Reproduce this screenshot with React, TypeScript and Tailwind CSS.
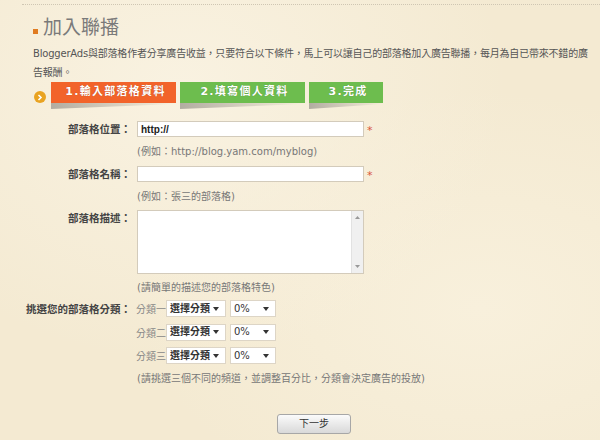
const font = "font-['DejaVu_Sans','Noto_Sans_CJK_TC',sans-serif]";

function Arrow() {
  return (
    <svg width="6" height="4" viewBox="0 0 6 4" className="shrink-0">
      <path d="M0 0h6L3 4z" fill="#333" />
    </svg>
  );
}

function Select({ value, w, bold }: { value: string; w: string; bold?: boolean }) {
  return (
    <div className={`${w} h-[17px] flex items-center justify-between pl-[3px] pr-[6px] bg-white border border-[#ddd5c6] text-[10px] leading-none text-[#333] ${bold ? 'font-bold' : ''}`}>
      <span>{value}</span>
      <Arrow />
    </div>
  );
}

function Label({ children }: { children: React.ReactNode }) {
  return <div className="w-[131px] shrink-0 text-right text-[10.5px] leading-[16px] font-bold text-[#444]">{children}</div>;
}

function Step({ text, w, color }: { text: string; w: string; color: string }) {
  return (
    <div className={`${w} flex flex-col`}>
      <div className={`h-[21px] ${color} flex items-center justify-center pl-[4px] text-white font-bold text-[11px] tracking-[1.3px] [text-shadow:0_0_1px_rgba(0,0,0,0.3)]`}>
        {text}
      </div>
      <div className="h-[6px] bg-gradient-to-r from-[#aaa59b] via-[#d2cbbb] to-transparent [clip-path:polygon(0_0,100%_0,100%_15%,0_100%)] opacity-90" />
    </div>
  );
}

export default function App() {
  const cats = ['分類一', '分類二', '分類三'];
  return (
    <div className={`w-[600px] h-[440px] overflow-hidden bg-[#f4ead2] bg-[radial-gradient(ellipse_at_30%_20%,#f9f2e1_0%,transparent_55%),radial-gradient(ellipse_at_80%_70%,#f8f0dc_0%,transparent_50%)] ${font}`}>
      <div className="pt-[4px] pl-[22px]">
        <div className="border-t border-dotted border-[#cfc6b3]" />
      </div>

      <div className="pl-[33px] pr-[8px]">
        <div className="mt-[10px] h-[24px] flex items-end">
          <div className="w-[5px] h-[5px] bg-[#e07b20] mb-[5px]" />
          <h1 className="ml-[5px] text-[19px] leading-[24px] text-[#7a7a7a]">加入聯播</h1>
        </div>

        <p className="mt-[5px] text-[10px] leading-[19px] text-[#555] tracking-[-0.2px] whitespace-nowrap">
          BloggerAds與部落格作者分享廣告收益，只要符合以下條件，馬上可以讓自己的部落格加入廣告聯播，每月為自已帶來不錯的廣
          <br />
          告報酬。
        </p>

        <div className="flex items-start gap-[4px]">
          <div className="w-[12px] h-[12px] mt-[9px] ml-[1px] mr-[1px] rounded-full bg-[#e9a321] flex items-center justify-center">
            <svg width="6" height="7" viewBox="0 0 6 7">
              <path d="M1.5 1l2.5 2.5L1.5 6" stroke="#fff" strokeWidth="1.6" fill="none" />
            </svg>
          </div>
          <Step text="1.輸入部落格資料" w="w-[125px]" color="bg-[#f2632a]" />
          <Step text="2.填寫個人資料" w="w-[125px]" color="bg-[#6dbd4e]" />
          <Step text="3.完成" w="w-[74px]" color="bg-[#6dbd4e]" />
        </div>
      </div>

      <div className="mt-[12px]">
        <div className="flex items-center h-[16px]">
          <Label>部落格位置：</Label>
          <div className="ml-[6px] flex items-center">
            <div className="w-[227px] h-[16px] bg-white border border-[#d3cbbb] flex items-center pl-[3px] text-[10px] font-bold text-[#222] font-['Liberation_Sans',sans-serif]">
              http://
            </div>
            <span className="ml-[3px] text-[11px] text-[#d9553a] leading-none mt-[2px]">*</span>
          </div>
        </div>
        <div className="mt-[7px] ml-[137px] text-[10px] leading-[16px] text-[#777]">(例如：http://blog.yam.com/myblog)</div>

        <div className="mt-[6px] flex items-center h-[16px]">
          <Label>部落格名稱：</Label>
          <div className="ml-[6px] flex items-center">
            <div className="w-[227px] h-[16px] bg-white border border-[#d3cbbb]" />
            <span className="ml-[3px] text-[11px] text-[#d9553a] leading-none mt-[2px]">*</span>
          </div>
        </div>
        <div className="mt-[7px] ml-[137px] text-[10px] leading-[16px] text-[#777]">(例如：張三的部落格)</div>

        <div className="mt-[5px] flex items-start">
          <Label>部落格描述：</Label>
          <div className="ml-[6px] w-[227px] h-[64px] bg-white border border-[#d3cbbb] flex">
            <div className="flex-1" />
            <div className="w-[12px] bg-[#f0f0f0] border-l border-[#e2e2e2] flex flex-col items-center justify-between py-[5px]">
              <svg width="5" height="3" viewBox="0 0 5 3"><path d="M0 3h5L2.5 0z" fill="#999" /></svg>
              <svg width="5" height="3" viewBox="0 0 5 3"><path d="M0 0h5L2.5 3z" fill="#999" /></svg>
            </div>
          </div>
        </div>
        <div className="mt-[6px] ml-[137px] text-[10px] leading-[16px] text-[#777]">(請簡單的描述您的部落格特色)</div>

        <div className="mt-[4px] flex items-start">
          <div className="pt-[1px]"><Label>挑選您的部落格分類：</Label></div>
          <div className="ml-[5px] flex flex-col gap-[6.5px]">
            {cats.map((c) => (
              <div key={c} className="flex items-center h-[17px]">
                <span className="w-[30px] text-[10px] text-[#888] leading-none mt-[3px]">{c}</span>
                <Select value="選擇分類" w="w-[60px]" bold />
                <div className="w-[4px]" />
                <Select value="0%" w="w-[46px]" />
              </div>
            ))}
          </div>
        </div>
        <div className="mt-[7px] ml-[137px] text-[10px] leading-[16px] text-[#777]">(請挑選三個不同的頻道，並調整百分比，分類會決定廣告的投放)</div>

        <div className="mt-[23px] ml-[277px]">
          <button className="w-[74px] h-[20px] border border-[#a7a7a7] rounded-[3px] bg-gradient-to-b from-[#fbfbfb] to-[#d9d9d9] text-[10px] text-[#333] leading-none">
            下一步
          </button>
        </div>
      </div>
    </div>
  );
}
